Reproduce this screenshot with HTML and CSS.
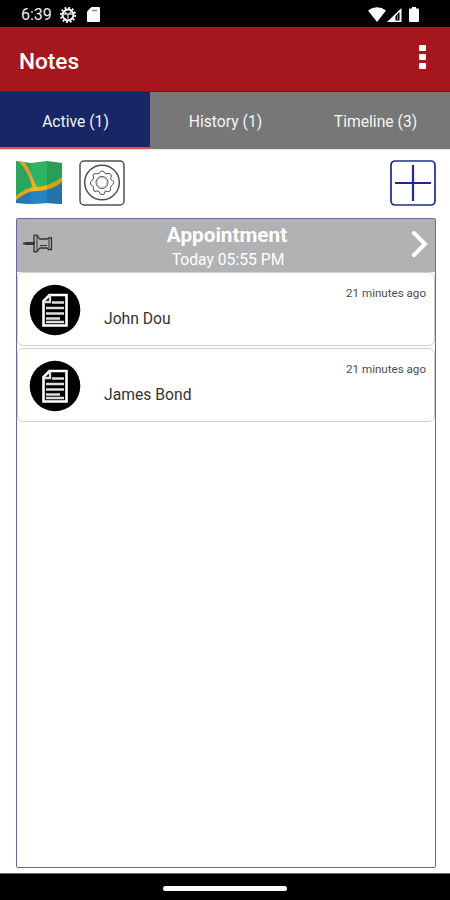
FILE: index.html
```html
<!DOCTYPE html>
<html lang="en">

<head>
    <meta charset="UTF-8">
    <meta name="viewport" content="width=device-width, initial-scale=1.0">
    <title>Notes</title>
    <link rel="stylesheet" href="styles.css">
</head>

<body>
    <div class="status">
        <span class="clock">6:39</span>
        <svg class="status-gear" width="18" height="18" viewBox="0 0 18 18">
            <circle cx="9" cy="9" r="7.2" fill="none" stroke="#fff" stroke-width="1.8" stroke-dasharray="1.9 1.87" />
            <circle cx="9" cy="9" r="5.4" fill="none" stroke="#fff" stroke-width="2" />
            <path d="M5 8h8M9 9v4M6 6l3 3 3-3" fill="none" stroke="#ccc" stroke-width="1.3" />
        </svg>
        <svg class="status-card" width="13" height="15" viewBox="0 0 13 15">
            <path d="M4.5 0H12a1 1 0 0 1 1 1v13a1 1 0 0 1-1 1H1a1 1 0 0 1-1-1V4.500z" fill="#fff" />
            <path d="M5 3.500h5" stroke="#888" stroke-width="1.500" />
        </svg>
        <svg class="status-right" width="52" height="16" viewBox="0 0 52 16">
            <path d="M0 3.500Q9-3 18 3.500L9 15z" fill="#fff" />
            <path d="M19 15L33.500 1v14z" fill="#fff" />
            <path d="M27.500 13.500V9l4-4v8.500z" fill="#000" />
            <path d="M29.500 13V8" stroke="#777" stroke-width="1" />
            <path d="M44 0h4v1.500h2a1 1 0 0 1 1 1V14a1 1 0 0 1-1 1h-8a1 1 0 0 1-1-1V2.500a1 1 0 0 1 1-1h2z" fill="#fff" />
        </svg>
    </div>

    <header class="header">
        <h1>Notes</h1>
        <div class="dots">
            <i></i>
            <i></i>
            <i></i>
        </div>
    </header>

    <nav class="tabs">
        <div class="tab active">Active (1)</div>
        <div class="tab">History (1)</div>
        <div class="tab">Timeline (3)</div>
    </nav>

    <main class="main">
        <div class="toolbar">
            <svg class="map" width="46" height="46" viewBox="0 0 46 46">
                <path d="M0 1L15 3L31 1L46 3V44L31 43L15 44L0 43z" fill="#2fb463" />
                <path d="M0 38L13 29L33 28L46 20V44L31 43L15 44L0 43z" fill="#2883c6" />
                <path d="M2.500 1.300L8 2Q13 7 15 14Q18 22 21 27L17 28Q13 17 11 13Q8 7 2.500 1.300z" fill="#eeae2c" />
                <path d="M0 36Q11 27 19 27Q33 27 46 17V22Q35 31 20 31Q11 31 0 40z" fill="#f9b616" />
                <path d="M0 1L15 3V44L0 43z" fill="#000" fill-opacity=".08" />
                <path d="M31 1L46 3V44L31 43z" fill="#000" fill-opacity=".12" />
            </svg>
            <svg class="settings" width="46" height="46" viewBox="0 0 46 46" fill="none" stroke="#505050">
                <rect x="1" y="1" width="44" height="44" rx="4" stroke-width="1.500" />
                <circle cx="23" cy="22.500" r="17.300" stroke-width="1.500" />
                <path d="M20.500 13Q21 11 23 11T25.500 13Q27 14.500 29 13.500T32 15T31.500 18Q31.500 20 33.500 20.500T34.500 23T33 25.500Q31 26 31.500 28.500T30 31.500T27 31Q25.500 31 25.500 33T23 34.500T20.500 33Q20.500 31 19 31T16 31.500T14.500 28.500Q15 26 13 25.500T11.500 23T12.500 20.500Q14.500 20 14.500 18T14 15T17 13.500Q19 14.500 20.500 13z" />
                <circle cx="23" cy="22.500" r="6" />
                <circle cx="23" cy="22.500" r="4.800" stroke="#aaa" stroke-width=".7" />
            </svg>
            <svg class="add" width="46" height="46" viewBox="0 0 46 46" fill="none" stroke="#1c2c91">
                <rect x="1" y="1" width="44" height="44" rx="4" stroke-width="1.700" />
                <path d="M5 23H41M23 5V41" stroke-width="2.200" />
            </svg>
        </div>

        <section class="list">
            <div class="list-head">
                <svg class="pin" width="30" height="20" viewBox="0 0 30 20" fill="none" stroke="#303030" stroke-width="1.300">
                    <path d="M0 10.500L4 9.700H11V11.300H4z" fill="#555" />
                    <path d="M11 2.500Q15 1.500 15 4L17 6H24L25.500 5H28.500V16.500H25.500L24 15H17L15 17Q15 19.500 11 18.500z" />
                    <path d="M14 3V18M26 6V15.500M17 12.500H24" stroke-width="1" />
                </svg>
                <div class="appointment">
                    <h2>Appointment</h2>
                    <p>Today 05:55 PM</p>
                </div>
                <svg class="arrow" width="18" height="28" viewBox="0 0 18 28">
                    <path d="M3 3L14 14L3 25" fill="none" stroke="#fff" stroke-width="4" stroke-linecap="round" />
                </svg>
            </div>

            <article class="note">
                <svg class="note-icon" width="52" height="52" viewBox="0 0 52 52">
                    <circle cx="26" cy="26" r="25.300" />
                    <path d="M20.500 11H37.500V41.500H14.500V17z" fill="none" stroke="#fff" stroke-width="2.600" />
                    <path d="M21 11V18H15M23 18.500H35M17 24H35M17 29.500H35M17 34.500H31M17 38H35" fill="none" stroke="#ddd" stroke-width="2.300" />
                </svg>
                <p class="name">John Dou</p>
                <span class="time">21 minutes ago</span>
            </article>
            <article class="note">
                <svg class="note-icon" width="52" height="52" viewBox="0 0 52 52">
                    <circle cx="26" cy="26" r="25.300" />
                    <path d="M20.500 11H37.500V41.500H14.500V17z" fill="none" stroke="#fff" stroke-width="2.600" />
                    <path d="M21 11V18H15M23 18.500H35M17 24H35M17 29.500H35M17 34.500H31M17 38H35" fill="none" stroke="#ddd" stroke-width="2.300" />
                </svg>
                <p class="name">James Bond</p>
                <span class="time">21 minutes ago</span>
            </article>
        </section>
    </main>

    <footer class="system-bar">
        <div class="handle"></div>
    </footer>
</body>

</html>
```
FILE: styles.css
```css
* {
    box-sizing: border-box;
    padding: 0;
    margin: 0;
}

body {
    display: flex;
    flex-direction: column;
    height: 900px;
    background-color: #fff;
    font-family: Roboto, sans-serif;
    overflow: hidden;
}

svg {
    display: block;
    flex-shrink: 0;
}

.status {
    display: flex;
    align-items: center;
    height: 27px;
    padding: 2px 30px 0 21px;
    background-color: #000;
    color: #eee;
}

.clock {
    width: 38px;
    font-size: 16px;
}

.status-card {
    margin-left: 10px;
}

.status-right {
    margin-left: auto;
}

.header {
    display: flex;
    justify-content: space-between;
    height: 65px;
    padding: 18px 24px 0 19px;
    background-color: #a5171c;
    border-bottom: 1px solid #9c0b0c;
}

.header h1 {
    color: #fff;
    font-size: 22.6px;
    line-height: 34px;
    font-weight: 500;
}

.dots {
    display: flex;
    flex-direction: column;
    gap: 3px;
}

.dots i {
    width: 7px;
    height: 6px;
    border-radius: 1px;
    background-color: #fff;
}

.tabs {
    display: grid;
    grid-template-columns: repeat(3, 1fr);
    height: 58px;
    border-bottom: 1px solid #e4e4e4;
}

.tab {
    padding: 19px 0 0 1px;
    background-color: #777;
    color: #f5f5f5;
    font-size: 15.7px;
    line-height: 21px;
    text-align: center;
}

.tab.active {
    background-color: #172766;
    border-bottom: 2px solid #ef4948;
}

.main {
    display: flex;
    flex-direction: column;
    flex: 1;
    padding: 10px 14px 5px 16px;
}

.toolbar {
    display: flex;
    height: 58px;
}

.settings {
    margin-left: 17px;
}

.add {
    margin-left: auto;
}

.list {
    flex: 1;
    border: 1px solid #6c6598;
    border-radius: 2px;
}

.list-head {
    display: flex;
    height: 53px;
    padding: 0 6px 0 6px;
    background-color: #b0b2b4;
    color: #fff;
}

.pin {
    margin-top: 14px;
}

.appointment {
    flex: 1;
    padding-right: 10px;
    text-align: center;
}

.appointment h2 {
    padding-top: 3px;
    font-size: 20.7px;
    line-height: 26px;
    font-weight: 700;
}

.appointment p {
    padding-left: 2px;
    font-size: 15.7px;
    line-height: 23px;
}

.arrow {
    margin-top: 11px;
}

.note {
    display: flex;
    height: 74px;
    margin-bottom: 2px;
    padding: 0 8px 0 11px;
    border: 1px solid #d0d0d0;
    border-radius: 6px;
    background-color: #fff;
}

.note-icon {
    margin-top: 11px;
}

.name {
    margin-left: 23px;
    padding-top: 36px;
    color: #333;
    font-size: 15.7px;
    line-height: 20px;
}

.time {
    margin-left: auto;
    padding-top: 13px;
    color: #4c4c4c;
    font-size: 11.6px;
    line-height: 14px;
}

.system-bar {
    display: flex;
    justify-content: center;
    height: 27px;
    padding-top: 12px;
    background-color: #000;
    border-top: 1px solid #666;
}

.handle {
    width: 124px;
    height: 5px;
    border-radius: 3px;
    background-color: #fff;
}
```
